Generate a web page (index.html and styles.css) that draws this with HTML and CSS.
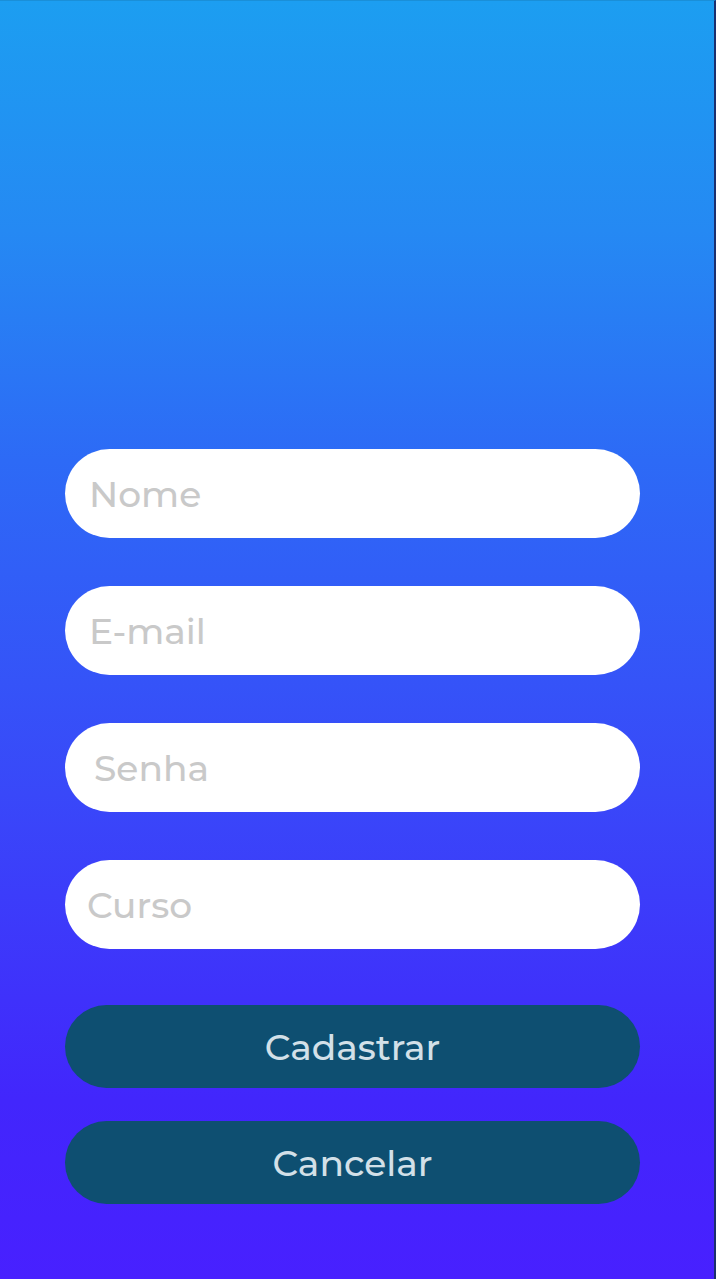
FILE: index.html
```html
<!DOCTYPE html>
<html lang="pt">
<head>
<meta charset="utf-8">
<title>Cadastro</title>
<link rel="stylesheet" href="styles.css">
</head>
<body>
<main class="screen">
  <form class="form">
    <div class="fields">
      <input class="field" type="text" placeholder="Nome">
      <input class="field" type="email" placeholder="E-mail">
      <input class="field field-shift" type="password" placeholder="Senha">
      <input class="field field-back" type="text" placeholder="Curso">
    </div>
    <div class="actions">
      <button class="btn" type="button">Cadastrar</button>
      <button class="btn" type="button">Cancelar</button>
    </div>
  </form>
</main>
</body>
</html>
```

FILE: styles.css
```css
html, body {
  margin: 0;
  padding: 0;
}

body {
  width: 716px;
  height: 1279px;
  overflow: hidden;
}

.screen {
  box-sizing: border-box;
  width: 716px;
  height: 1279px;
  background: linear-gradient(180deg, #1c9ef1 0%, #2589f3 18%, #2d6af6 36%, #3948f9 62%, #4226fc 86%, #4820ff 100%);
  border-right: 2px solid #1b2f6e;
  border-top: 1px solid #1a8fd8;
  padding: 448px 0 0 65px;
  font-family: "Montserrat", "Open Sans", "Noto Sans", sans-serif;
}

.form {
  width: 575px;
  display: flex;
  flex-direction: column;
  gap: 56px;
}

.fields {
  display: flex;
  flex-direction: column;
  gap: 48px;
}

.field {
  box-sizing: border-box;
  width: 575px;
  height: 89px;
  border: none;
  border-radius: 45px;
  background: #ffffff;
  padding: 0 24px;
  font-family: inherit;
  font-size: 36px;
  font-weight: 500;
  color: #555;
  outline: none;
}

.field-shift {
  padding-left: 29px;
}

.field-back {
  padding-left: 22px;
}

.field::placeholder {
  color: #c9c9c9;
}

.actions {
  display: flex;
  flex-direction: column;
  gap: 33px;
}

.btn {
  box-sizing: border-box;
  width: 575px;
  height: 83px;
  border: none;
  border-radius: 42px;
  background: #0e4f71;
  color: #d3e0e8;
  font-family: inherit;
  font-size: 36px;
  font-weight: 500;
  padding: 0;
}
```
